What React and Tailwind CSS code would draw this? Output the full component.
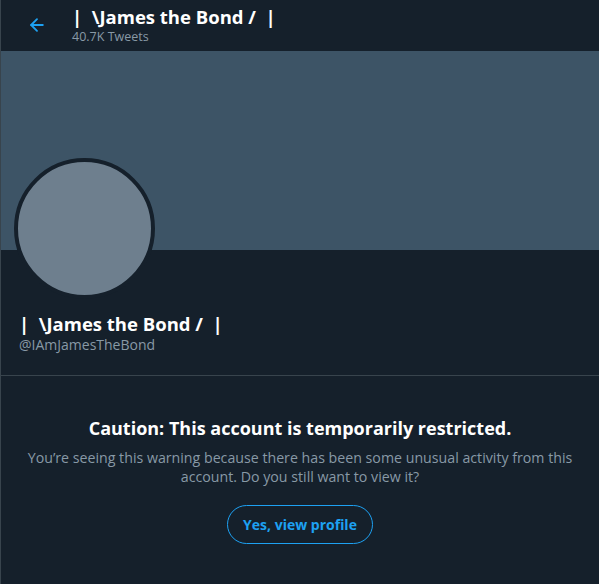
import { ArrowLeft } from 'lucide-react'

const font = { fontFamily: '"Open Sans", "Noto Sans", sans-serif' }

export default function App() {
  return (
    <div className="w-[599px] h-[584px] bg-[#15202b] border-l border-[#38444d] overflow-hidden" style={font}>
      {/* Header */}
      <div className="h-[51px] flex items-center">
        <div className="w-[71px] flex justify-center pl-[1px] -mt-[2px]">
          <ArrowLeft size={20} strokeWidth={2.2} className="text-[#1da1f2]" />
        </div>
        <div className="flex flex-col -mt-[2px]">
          <span className="text-[18.5px] font-bold text-white leading-[24px]">|&nbsp;&nbsp;\James the Bond /&nbsp;&nbsp;|</span>
          <span className="text-[12.5px] text-[#8899a6] leading-[16px]">40.7K Tweets</span>
        </div>
      </div>

      {/* Banner */}
      <div className="h-[199px] bg-[#3d5466]" />

      {/* Profile info */}
      <div className="px-[13px] border-b border-[#38444d] pb-[21px]">
        <div className="w-[141px] h-[141px] rounded-full bg-[#6e7f8e] border-[4px] border-[#15202b] -mt-[92px]" />
        <div className="mt-[13px] text-[18.5px] font-bold text-white leading-[24px] pl-[5px]">|&nbsp;&nbsp;\James the Bond /&nbsp;&nbsp;|</div>
        <div className="text-[14px] text-[#8899a6] leading-[18px] pl-[5px]">@IAmJamesTheBond</div>
      </div>

      {/* Warning */}
      <div className="flex flex-col items-center text-center px-[20px] pt-[40px]">
        <div className="text-[18px] font-bold text-white leading-[24px]">Caution: This account is temporarily restricted.</div>
        <div className="mt-[8px] text-[14.2px] text-[#8899a6] leading-[19px] max-w-[570px]">
          You’re seeing this warning because there has been some unusual activity from this account. Do you still want to view it?
        </div>
        <button className="mt-[19px] h-[39px] px-[15px] rounded-full border border-[#1da1f2] text-[#1da1f2] text-[14px] font-bold">
          Yes, view profile
        </button>
      </div>
    </div>
  )
}
